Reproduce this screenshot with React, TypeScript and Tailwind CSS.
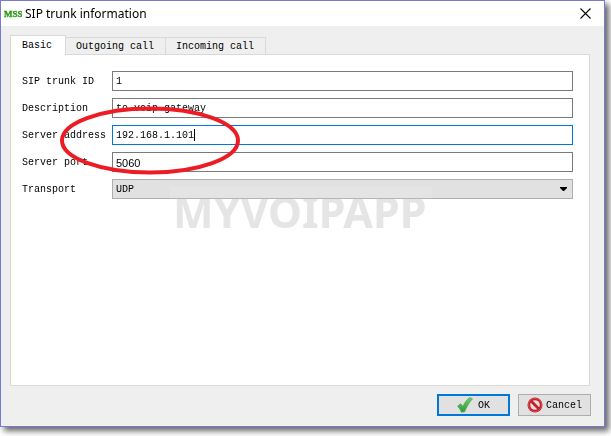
import React, { useState } from 'react';

const TABS = ['Basic', 'Outgoing call', 'Incoming call'];

interface Trunk {
  id: string;
  description: string;
  address: string;
  port: string;
  transport: string;
}

const INPUT = 'h-5 w-full min-w-0 bg-white border px-[3px] pt-px outline-none';

const Row: React.FC<{ id: string; label: string; children: React.ReactNode }> = ({ id, label, children }) => (
  <div className="flex items-center h-5">
    <label htmlFor={id} className="w-[90px] shrink-0 pt-0.5 whitespace-nowrap">{label}</label>
    <div className="relative flex flex-1 min-w-0">{children}</div>
  </div>
);

const Logo = () => (
  <svg width="18" height="18" viewBox="0 0 18 18" aria-hidden="true">
    <defs>
      <linearGradient id="logo" x1="0" y1="0" x2="0" y2="1">
        <stop offset="0" stopColor="#1f8a12" />
        <stop offset="1" stopColor="#4fb52c" />
      </linearGradient>
    </defs>
    <text x="0" y="12" fill="url(#logo)" stroke="#2c9a1c" strokeWidth="0.4" className="font-['Liberation_Serif',serif] text-[9px] font-bold">
      MSS
    </text>
  </svg>
);

const CheckIcon = () => (
  <svg width="16" height="16" viewBox="0 0 16 16" aria-hidden="true">
    <defs>
      <linearGradient id="check" x1="0" y1="0" x2="0" y2="1">
        <stop offset="0" stopColor="#6fce6b" />
        <stop offset="1" stopColor="#2b9b37" />
      </linearGradient>
    </defs>
    <path
      d="M0.6 9.2 L3.6 6.8 C4.7 7.6 5.4 8.5 5.9 9.5 C7.6 5.6 9.8 2.8 12.6 0.6 L15.5 1.8 C12.3 5.4 9.8 9.6 7.6 14.8 L4.4 15.2 C3.6 12.8 2.3 10.8 0.6 9.2 Z"
      fill="url(#check)"
      stroke="#4aa551"
      strokeWidth="0.7"
      strokeLinejoin="round"
    />
  </svg>
);

const CancelIcon = () => (
  <svg width="16" height="16" viewBox="0 0 16 16" aria-hidden="true">
    <circle cx="8" cy="8" r="7.5" fill="#c3212a" />
    <circle cx="8" cy="8" r="6.6" fill="none" stroke="#d9535a" strokeWidth="0.8" />
    <circle cx="8" cy="8" r="4.8" fill="#e9dede" />
    <path d="M4.3 4.3 L11.7 11.7" stroke="#c3212a" strokeWidth="2.8" />
  </svg>
);

export default function App() {
  const [tab, setTab] = useState(0);
  const [trunk, setTrunk] = useState<Trunk>({
    id: '1',
    description: 'to voip gateway',
    address: '192.168.1.101',
    port: '5060',
    transport: 'UDP',
  });

  const update = (key: keyof Trunk) => (e: React.ChangeEvent<HTMLInputElement | HTMLSelectElement>) =>
    setTrunk({ ...trunk, [key]: e.target.value });

  return (
    <div className="bg-white pr-[6px] pb-[9px] text-black text-[10px] leading-3 font-['Liberation_Mono',monospace]">
      <div className="bg-[#efefef] border border-[#7b79d6] shadow-[4px_4px_6px_rgba(0,0,0,0.6)]">
        {/* Title bar */}
        <header className="flex items-center h-[25px] bg-white pl-[3px] pr-[13px]">
          <Logo />
          <h1 className="ml-[3px] flex-1 text-[12px] leading-4 font-['Noto_Sans',sans-serif]">SIP trunk information</h1>
          <button type="button" aria-label="Close">
            <svg width="11" height="11" viewBox="0 0 11 11" fill="none" stroke="#000" strokeWidth="1.1">
              <path d="M0.5 0.5 L10.5 10.5 M10.5 0.5 L0.5 10.5" />
            </svg>
          </button>
        </header>

        <div className="pt-[9px] pl-[9px] pr-[14px]">
          {/* Tabs */}
          <div role="tablist" className="flex items-end h-5 -mb-px relative z-10">
            {TABS.map((name, i) => (
              <button
                key={name}
                type="button"
                role="tab"
                aria-selected={i === tab}
                onClick={() => setTab(i)}
                className={
                  i === tab
                    ? 'h-5 pl-[11px] pr-[13px] pt-px bg-white border border-b-0 border-[#d9d9d9]'
                    : 'h-[18px] pl-[10px] pr-[11px] pt-px bg-[#efefef] border border-l-0 border-[#d9d9d9]'
                }
              >
                {name}
              </button>
            ))}
          </div>

          <div role="tabpanel" className="relative bg-white border border-[#d9d9d9] min-h-[332px] pt-4 pl-[11px] pr-4">
            <form className="flex flex-col gap-[7px]">
              <Row id="trunk-id" label="SIP trunk ID">
                <input id="trunk-id" className={`${INPUT} border-[#7a7a7a]`} value={trunk.id} onChange={update('id')} />
              </Row>
              <Row id="description" label="Description">
                <input id="description" className={`${INPUT} border-[#7a7a7a]`} value={trunk.description} onChange={update('description')} />
              </Row>
              <Row id="address" label="Server address">
                <input id="address" className={`${INPUT} border-[#0078d7]`} value={trunk.address} onChange={update('address')} />
                <span className="absolute left-[82px] top-1 w-px h-3 bg-black" />
              </Row>
              <Row id="port" label="Server port">
                <input
                  id="port"
                  className={`${INPUT} border-[#7a7a7a] text-[11px] font-['Liberation_Sans',sans-serif]`}
                  value={trunk.port}
                  onChange={update('port')}
                />
              </Row>
              <Row id="transport" label="Transport">
                <select
                  id="transport"
                  className="h-5 w-full appearance-none bg-[#e1e1e1] border border-[#adadad] px-[3px] pt-px outline-none"
                  value={trunk.transport}
                  onChange={update('transport')}
                >
                  <option>UDP</option>
                  <option>TCP</option>
                  <option>TLS</option>
                </select>
                <svg className="absolute right-[6px] top-2 pointer-events-none" width="7" height="4" viewBox="0 0 7 4" aria-hidden="true">
                  <path d="M0 0 H7 V1 L4 4 H3 L0 1 Z" fill="#000" />
                </svg>
              </Row>
            </form>

            {/* Watermark */}
            <div className="absolute left-[159px] top-[131px] w-[262px] pl-[3px] pointer-events-none bg-white/10">
              <p className="mix-blend-darken text-[#e5e5e5] text-[43px] leading-[52px] font-bold font-['Noto_Sans',sans-serif]">MYVOIPAPP</p>
            </div>

            {/* Highlight around the server address */}
            <svg className="absolute left-[49px] top-[51px] pointer-events-none" width="180" height="69" viewBox="0 0 180 69" aria-hidden="true">
              <ellipse cx="90" cy="34.5" rx="88" ry="32" fill="none" stroke="#ed1c24" strokeWidth="4" />
            </svg>
          </div>
        </div>

        {/* Buttons */}
        <footer className="flex justify-end gap-2 pt-2 pb-[10px] pr-[13px]">
          <button type="button" className="flex items-center justify-center gap-[5px] w-[73px] h-[22px] bg-[#e1e1e1] border-2 border-[#0078d7]">
            <CheckIcon />
            <span className="pt-0.5">OK</span>
          </button>
          <button type="button" className="flex items-center justify-center gap-[3px] w-[73px] h-[22px] bg-[#e1e1e1] border border-[#adadad]">
            <CancelIcon />
            <span className="pt-0.5">Cancel</span>
          </button>
        </footer>
      </div>
    </div>
  );
}
